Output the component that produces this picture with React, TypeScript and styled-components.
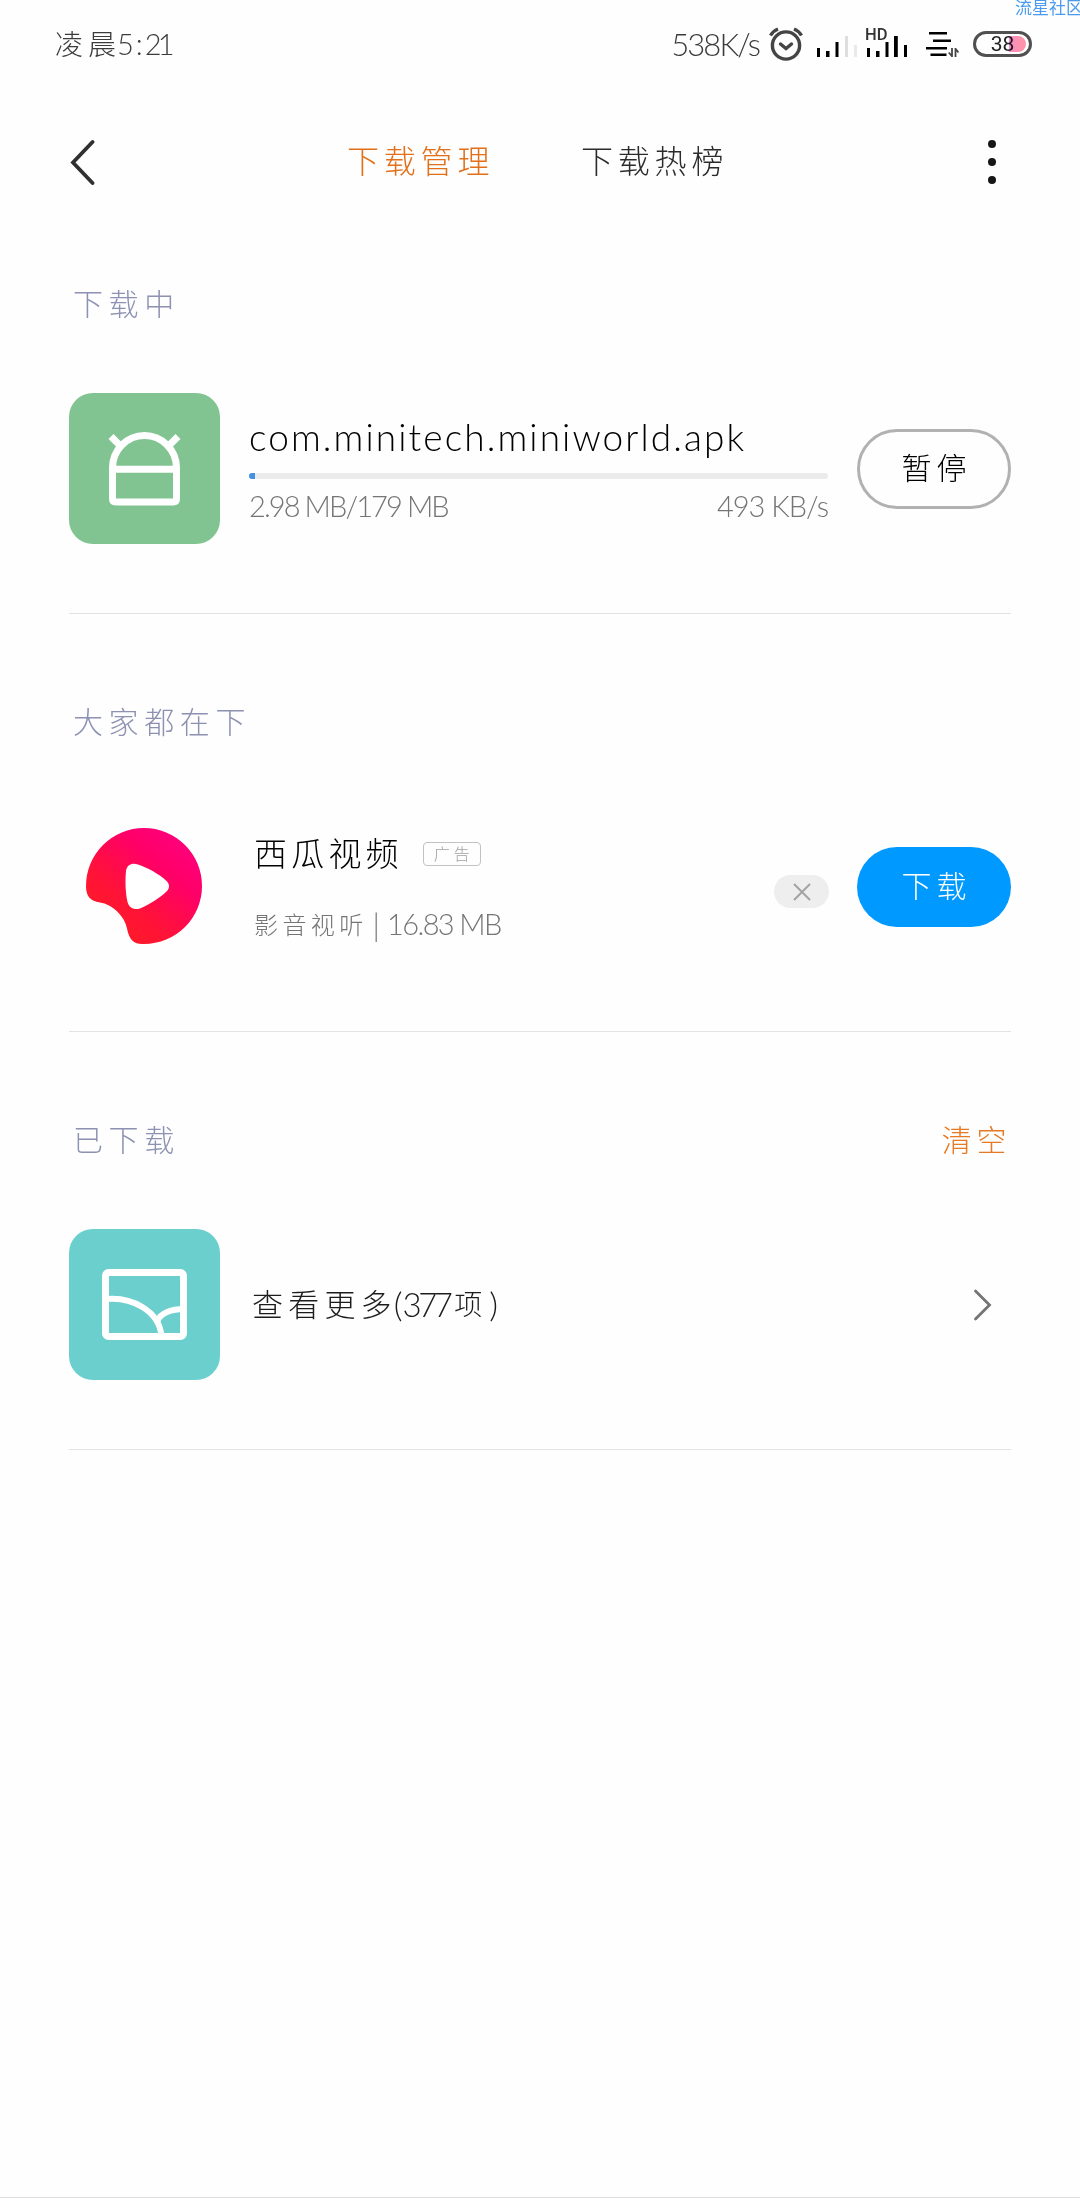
import React from "react";
import styled, { createGlobalStyle } from "styled-components";

const GlobalStyle = createGlobalStyle`
  *, *::before, *::after { box-sizing: border-box; }
  html, body { margin: 0; padding: 0; }
  body {
    background: #fefefe;
    font-family: Lato, "Noto Sans CJK SC", sans-serif;
    font-weight: 300;
  }
`;

const Screen = styled.main`
  position: relative;
  display: flex;
  flex-direction: column;
  width: 1080px;
  height: 2198px;
  overflow: hidden;
  background: #fefefe;
  border-bottom: 1px solid #dedede;
`;

const Watermark = styled.div`
  position: absolute;
  top: -2px;
  left: 1015px;
  font-size: 17px;
  line-height: 20px;
  font-weight: 400;
  white-space: nowrap;
  color: #4a9bee;
`;

/* A run of text with its own size and tracking. */
const Text = styled.span<{ $size: number; $track?: number; $color?: string; $gap?: number }>`
  flex: none;
  font-size: ${(p) => p.$size}px;
  line-height: 1.25;
  letter-spacing: ${(p) => p.$track ?? 0}px;
  color: ${(p) => p.$color ?? "inherit"};
  margin-left: ${(p) => p.$gap ?? 0}px;
  white-space: pre;
`;

const Line = styled.div<{ $height: number; $top?: number }>`
  display: flex;
  align-items: center;
  height: ${(p) => p.$height}px;
  margin-top: ${(p) => p.$top ?? 0}px;
`;

const StatusBar = styled.header`
  display: flex;
  align-items: center;
  justify-content: space-between;
  height: 80px;
  padding: 8px 48px 0 55px;
  color: #3c3c3c;
`;

const StatusIcons = styled.div`
  display: flex;
  align-items: center;
`;

const Battery = styled.div`
  position: relative;
  display: flex;
  align-items: center;
  justify-content: center;
  width: 59px;
  height: 26px;
  margin-left: 14px;
  border: 3px solid #505050;
  border-radius: 13px;
  font-family: Roboto, sans-serif;
  font-weight: 400;
  font-size: 21px;
  line-height: 20px;
  color: #222;
`;

const BatteryLevel = styled.i`
  position: absolute;
  top: 2px;
  right: 3px;
  width: 17px;
  height: 16px;
  border-radius: 0 8px 8px 0;
  background: linear-gradient(90deg, #f58fce, #ff94ac 60%);
  mix-blend-mode: multiply;
`;

const NavBar = styled.nav`
  display: grid;
  grid-template-columns: 347px 234px 1fr auto;
  align-items: center;
  height: 116px;
  padding: 48px 84px 0 0;
`;

const Tab = styled.span<{ $active?: boolean }>`
  font-size: 32px;
  line-height: 40px;
  letter-spacing: 4.8px;
  padding-bottom: 2px;
  color: ${(p) => (p.$active ? "#e2701a" : "#2b2b2b")};
`;

const IconButton = styled.button<{ $indent?: number }>`
  display: flex;
  margin: 0;
  padding: 0 0 0 ${(p) => p.$indent ?? 0}px;
  border: 0;
  background: none;
`;

const Section = styled.section`
  height: 418px;
  margin: 0 69px;
  padding-top: 83px;
  border-bottom: 1px solid #e3e3e3;
`;

const SectionHead = styled.div`
  display: flex;
  align-items: center;
  justify-content: space-between;
  height: 50px;
  padding: 0 0 0 4px;
`;

const Row = styled.div`
  display: flex;
  align-items: center;
  height: 151px;
  margin-top: 64px;
`;

const Tile = styled.div<{ $bg?: string }>`
  flex: none;
  display: flex;
  width: 151px;
  height: 151px;
  border-radius: 24px;
  background: ${(p) => p.$bg ?? "transparent"};
`;

const Body = styled.div<{ $indent: number }>`
  display: flex;
  flex-direction: column;
  flex: 1;
  min-width: 0;
  padding-left: ${(p) => p.$indent}px;
`;

const Track = styled.div`
  height: 6px;
  margin-top: 10px;
  border-radius: 3px;
  background: #ebebeb;
  overflow: hidden;
`;

const Fill = styled.div`
  height: 6px;
  background: #4490e2;
`;

const Spread = styled.div`
  display: flex;
  align-items: center;
  justify-content: space-between;
  height: 36px;
  margin-top: 10px;
  color: #757575;
`;

const Pill = styled.button<{ $filled?: boolean }>`
  flex: none;
  width: 154px;
  height: 80px;
  margin: 0 0 0 29px;
  padding: 0 0 6px 5px;
  border: ${(p) => (p.$filled ? "0" : "3px solid #b1b1b1")};
  border-radius: 40px;
  background: ${(p) => (p.$filled ? "#0099ff" : "transparent")};
  color: ${(p) => (p.$filled ? "#fff" : "#000")};
  font: inherit;
  font-size: 30px;
  letter-spacing: 5px;
`;

const AdTag = styled.span`
  display: flex;
  align-items: center;
  justify-content: center;
  width: 58px;
  height: 24px;
  margin-left: 20px;
  padding-left: 4px;
  border: 1px solid #c2c2c2;
  border-radius: 4px;
  font-size: 16px;
  line-height: 20px;
  letter-spacing: 4px;
  color: #a0a0a0;
`;

const Dismiss = styled.button`
  flex: none;
  display: flex;
  align-items: center;
  justify-content: center;
  width: 55px;
  height: 33px;
  margin: 10px -1px 0 0;
  padding: 0;
  border: 0;
  border-radius: 17px;
  background: #eeeeee;
`;

const AlarmIcon = () => (
  <svg width="36" height="36" viewBox="0 0 36 36" fill="none" stroke="#444" strokeWidth="3.4" strokeLinecap="round">
    <circle cx="18" cy="19.5" r="13.6" />
    <path d="M2.5 9.5Q5 5 10 3M26 3Q31 5 33.5 9.5" strokeLinecap="butt" />
    <path d="M12.5 18L18 22.5L23.5 18" />
  </svg>
);

type Bar = [x: number, top: number, width: number, color?: string];
const BARS_ONE: Bar[] = [[0, 17, 3], [9, 20, 3.5], [18.5, 11, 3], [28, 5, 3, "#dedede"], [37, 14, 3, "#e9e9e9"]];
const BARS_TWO: Bar[] = [[0, 17, 3], [9, 20, 3.5], [18.5, 11, 3], [27, 5, 3.8], [37, 14, 3]];

const SignalBars = ({ bars }: { bars: Bar[] }) => (
  <svg width="41" height="26" viewBox="0 0 41 26">
    {bars.map(([x, top, w, color]) => (
      <rect key={x} x={x} y={top} width={w} height={26 - top} fill={color ?? "#000"} />
    ))}
  </svg>
);

const Signal = styled.div<{ $gap: number }>`
  position: relative;
  display: flex;
  margin-left: ${(p) => p.$gap}px;
`;

const HdMark = styled.b`
  position: absolute;
  left: -2px;
  top: -4px;
  font: 500 16.5px/16px Roboto, sans-serif;
  color: #333;
`;

const NetworkIcon = styled(({ className }: { className?: string }) => (
  <svg className={className} width="33" height="28" viewBox="0 0 33 28" fill="none">
    <path d="M3 3.2H21M7 10.7H25M0 18.2H21M4.500 24.700H20.500" stroke="#000" strokeWidth="2.6" />
    <path d="M26 18V27M29.500 27V18M26.200 26.500L22.800 22.500M29.300 18.500L32.500 22.500" stroke="#444" strokeWidth="1.8" />
  </svg>
))`
  margin-left: 18px;
`;

const BackIcon = () => (
  <svg width="26" height="48" viewBox="0 0 26 48" fill="none" stroke="#303030" strokeWidth="3.8">
    <path d="M23.500 4L4 24.500L23.500 45" strokeLinecap="round" />
  </svg>
);

const MoreIcon = () => (
  <svg width="8" height="46" viewBox="0 0 8 46" fill="#161616">
    <circle cx="4" cy="5" r="4" />
    <circle cx="4" cy="23" r="4" />
    <circle cx="4" cy="41" r="4" />
  </svg>
);

const ApkIcon = () => (
  <svg width="151" height="151" viewBox="0 0 151 151" fill="none" stroke="#fff" strokeWidth="7">
    <path d="M43.500 75A32 32.500 0 0 1 107.500 75V105.500Q107.500 109 104 109H47Q43.500 109 43.500 105.500Z" />
    <path d="M43.500 76.200H107.500M42 43.500L50.500 52M109 43.500L100.500 52" />
  </svg>
);

const VideoIcon = () => (
  <svg width="151" height="151" viewBox="0 0 151 151">
    <defs>
      <linearGradient id="melon" x1="0.2" y1="0.85" x2="0.8" y2="0.15">
        <stop offset="0" stopColor="#ff1a28" />
        <stop offset="0.3" stopColor="#ff1238" />
        <stop offset="0.75" stopColor="#ff0068" />
        <stop offset="1" stopColor="#ff0078" />
      </linearGradient>
    </defs>
    <path
      fill="url(#melon)"
      d="M17 75A58 58 0 1 1 75 133C65 133.500 60.500 129.500 58 117.500C56 105.500 43 93 31 91.500C21 90 17 85 17 75Z"
    />
    <path
      fill="#fff"
      d="M57 60C58 54 63 51.500 69 53.500C80 57.500 90 63 97 69.500C101 73 101 77.500 97 81C90 87.500 80 93.500 71 97.500C65 99.500 60 96.500 58.500 91C56.500 82 56 70 57 60Z"
    />
  </svg>
);

const GalleryIcon = () => (
  <svg width="151" height="151" viewBox="0 0 151 151" fill="none" stroke="#fff">
    <rect x="36.500" y="43.500" width="78" height="64" rx="3" strokeWidth="7" />
    <path d="M38 70C62 68 90 81 92.500 107M115 80C103 80 91 84 88.500 92" strokeWidth="6" />
  </svg>
);

const CrossIcon = () => (
  <svg width="18" height="18" viewBox="0 0 18 18" stroke="#a3a3a3" strokeWidth="2">
    <path d="M1 1L17 17M17 1L1 17" />
  </svg>
);

const ForwardIcon = () => (
  <svg width="38" height="32" viewBox="0 0 38 32" fill="none" stroke="#747474" strokeWidth="2.8" strokeLinecap="round">
    <path d="M2.500 2L16.500 16L2.500 30" />
  </svg>
);

const LABEL = "#8d92b2";
const ACCENT = "#e67a24";
const MUTED = "#757575";

export default function App() {
  const progress = 6 / 578;
  return (
    <>
      <GlobalStyle />
      <Screen>
        <Watermark>流星社区</Watermark>
        <StatusBar>
          <Line $height={40}>
            <Text $size={28} $track={5}>凌晨</Text>
            <Text $size={29} $gap={-4}>5</Text>
            <Text $size={29} $gap={2}>:</Text>
            <Text $size={29} $track={-4} $gap={2}>21</Text>
          </Line>
          <StatusIcons>
            <Text $size={31} $track={-1.9}>538K/s</Text>
            <Signal $gap={9}><AlarmIcon /></Signal>
            <Signal $gap={13}><SignalBars bars={BARS_ONE} /></Signal>
            <Signal $gap={9}>
              <HdMark>HD</HdMark>
              <SignalBars bars={BARS_TWO} />
            </Signal>
            <NetworkIcon />
            <Battery>38<BatteryLevel /></Battery>
          </StatusIcons>
        </StatusBar>

        <NavBar>
          <IconButton $indent={69} aria-label="返回"><BackIcon /></IconButton>
          <Tab $active>下载管理</Tab>
          <Tab>下载热榜</Tab>
          <IconButton aria-label="更多"><MoreIcon /></IconButton>
        </NavBar>

        <Section>
          <SectionHead>
            <Text $size={30} $track={5.6} $color={LABEL}>下载中</Text>
          </SectionHead>
          <Row>
            <Tile $bg="#82c491"><ApkIcon /></Tile>
            <Body $indent={29}>
              <Line $height={50}>
                <Text $size={37} $track={2.1} $color="#000">com.minitech.miniworld.apk</Text>
              </Line>
              <Track><Fill style={{ width: `${progress * 100}%` }} /></Track>
              <Spread>
                <Text $size={29} $track={-1.9}>2.98 MB/179 MB</Text>
                <Text $size={29} $track={-1}>493 KB/s</Text>
              </Spread>
            </Body>
            <Pill>暂停</Pill>
          </Row>
        </Section>

        <Section>
          <SectionHead>
            <Text $size={30} $track={5.6} $color={LABEL}>大家都在下</Text>
          </SectionHead>
          <Row>
            <Tile><VideoIcon /></Tile>
            <Body $indent={34}>
              <Line $height={46}>
                <Text $size={33} $track={4.2} $color="#000">西瓜视频</Text>
                <AdTag>广告</AdTag>
              </Line>
              <Line $height={36} $top={30}>
                <Text $size={24} $track={4.4} $color={MUTED}>影音视听</Text>
                <Text $size={31} $gap={5} $color={MUTED}>|</Text>
                <Text $size={29} $track={-1.6} $gap={7} $color={MUTED}>16.83 MB</Text>
              </Line>
            </Body>
            <Dismiss aria-label="关闭"><CrossIcon /></Dismiss>
            <Pill $filled>下载</Pill>
          </Row>
        </Section>

        <Section>
          <SectionHead>
            <Text $size={30} $track={5.6} $color={LABEL}>已下载</Text>
            <Text $size={30} $track={4.6} $color={ACCENT}>清空</Text>
          </SectionHead>
          <Row>
            <Tile $bg="#6acfcd"><GalleryIcon /></Tile>
            <Body $indent={32}>
              <Line $height={50}>
                <Text $size={31} $track={5.2} $color="#1c1c1c">查看更多</Text>
                <Text $size={34} $gap={-3} $color="#1c1c1c">(</Text>
                <Text $size={33} $track={-3.6} $color="#1c1c1c">377</Text>
                <Text $size={28} $gap={5} $color="#1c1c1c">项</Text>
                <Text $size={34} $gap={7} $color="#1c1c1c">)</Text>
              </Line>
            </Body>
            <ForwardIcon />
          </Row>
        </Section>
      </Screen>
    </>
  );
}
